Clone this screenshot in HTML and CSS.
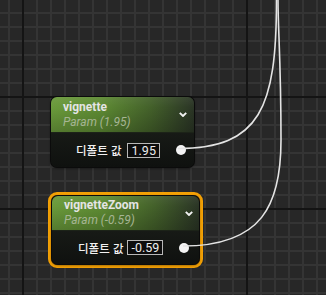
FILE: index.html
```html
<!DOCTYPE html>
<html lang="ko">
<head>
<meta charset="utf-8">
<link rel="stylesheet" href="styles.css">
</head>
<body>
<div class="canvas">
  <div class="node node-a">
    <div class="node-head">
      <div class="titles">
        <div class="title">vignette</div>
        <div class="sub">Param (1.95)</div>
      </div>
      <svg class="chev" width="8" height="5" viewBox="0 0 8 5"><path d="M0.8 0.8 L4 4 L7.2 0.8" fill="none" stroke="#f2f2f2" stroke-width="1.9"/></svg>
    </div>
    <div class="node-body">
      <span class="label">디폴트 값</span>
      <span class="val">1.95</span>
      <span class="pin"></span>
    </div>
  </div>

  <div class="sel">
    <div class="node node-b">
      <div class="node-head">
        <div class="titles">
          <div class="title">vignetteZoom</div>
          <div class="sub">Param (-0.59)</div>
        </div>
        <svg class="chev" width="8" height="5" viewBox="0 0 8 5"><path d="M0.8 0.8 L4 4 L7.2 0.8" fill="none" stroke="#f2f2f2" stroke-width="1.9"/></svg>
      </div>
      <div class="node-body">
        <span class="label">디폴트 값</span>
        <span class="val">-0.59</span>
        <span class="pin"></span>
      </div>
    </div>
  </div>

  <svg class="wires" width="326" height="295" viewBox="0 0 326 295">
    <path d="M178 148.5 C260 148.5 276.5 108 276.5 0" fill="none" stroke="#e4e4e4" stroke-width="1.6"/>
    <path d="M183 246 C262 246 281 205 281 140 C281 60 278 30 278 0" fill="none" stroke="#e4e4e4" stroke-width="1.6"/>
  </svg>
</div>
</body>
</html>
```

FILE: styles.css
```css
html, body {
  margin: 0;
  padding: 0;
  background: #262626;
}

.canvas {
  position: relative;
  width: 326px;
  height: 295px;
  overflow: hidden;
  background-color: #272727;
  background-image:
    linear-gradient(to right, #141414 2px, transparent 2px),
    linear-gradient(to bottom, #141414 2px, transparent 2px),
    linear-gradient(to right, #343434 2px, transparent 2px),
    linear-gradient(to bottom, #343434 2px, transparent 2px);
  background-size: 224px 100%, 100% 112px, 14px 14px, 14px 14px;
  background-position: 22px 0, 0 96px, 8px 0, 0 12px;
  font-family: Roboto, "Noto Sans CJK KR", sans-serif;
}

.node {
  position: absolute;
  display: flex;
  flex-direction: column;
  border-radius: 6px;
  background: #111311;
  box-shadow: 0 0 0 1px #0b0b0b, 0 1px 3px rgba(0,0,0,0.6);
  overflow: hidden;
}

.node-a {
  left: 51px;
  top: 97px;
  width: 143px;
  height: 70px;
}

.sel {
  position: absolute;
  left: 48px;
  top: 192px;
  width: 149px;
  height: 70px;
  border: 3px solid #f2a005;
  border-radius: 9px;
  box-shadow: inset 0 0 0 1px #7a4c00;
}

.sel .node {
  left: 1px;
  top: 1px;
  width: 147px;
  height: 68px;
}

.node-head {
  height: 36px;
  box-sizing: border-box;
  display: flex;
  align-items: center;
  padding: 0 7px 0 12px;
  background:
    linear-gradient(to bottom, rgba(255,255,255,0.06) 0, rgba(0,0,0,0) 30%, rgba(0,0,0,0.2) 100%),
    linear-gradient(to right, #6a9a3b 0%, #5d8a33 35%, #43602a 70%, #2a3425 100%);
  border-bottom: 1px solid #1c2318;
}

.node-b .node-head {
  height: 35px;
  padding-right: 6px;
}

.titles {
  flex: 1;
  display: flex;
  flex-direction: column;
}

.title {
  font-size: 12px;
  font-weight: bold;
  line-height: 15px;
  color: #e4e4e4;
}

.sub {
  font-size: 12px;
  font-style: italic;
  line-height: 15px;
  color: #a6b594;
}

.chev {
  display: block;
}

.node-body {
  flex: 1;
  display: flex;
  align-items: center;
  padding-left: 25px;
  background: linear-gradient(to bottom, #171a16 0%, #0f110f 100%);
}

.node-b .node-body {
  padding-left: 26px;
}

.label {
  font-family: "Noto Sans CJK KR", sans-serif;
  font-size: 11.5px;
  font-weight: 500;
  color: #f2f2f2;
  margin-right: 5px;
}

.node-b .label {
  margin-right: 3px;
}

.val {
  box-sizing: border-box;
  height: 15px;
  padding: 0 3px 0 4px;
  border: 1px solid #b8b8b8;
  font-size: 12.5px;
  line-height: 13px;
  color: #ececec;
  background: #0d0d0d;
}

.pin {
  width: 10px;
  height: 10px;
  border-radius: 50%;
  background: #f4f4f4;
  margin-left: 16px;
}

.wires {
  position: absolute;
  left: 0;
  top: 0;
  pointer-events: none;
}
```
